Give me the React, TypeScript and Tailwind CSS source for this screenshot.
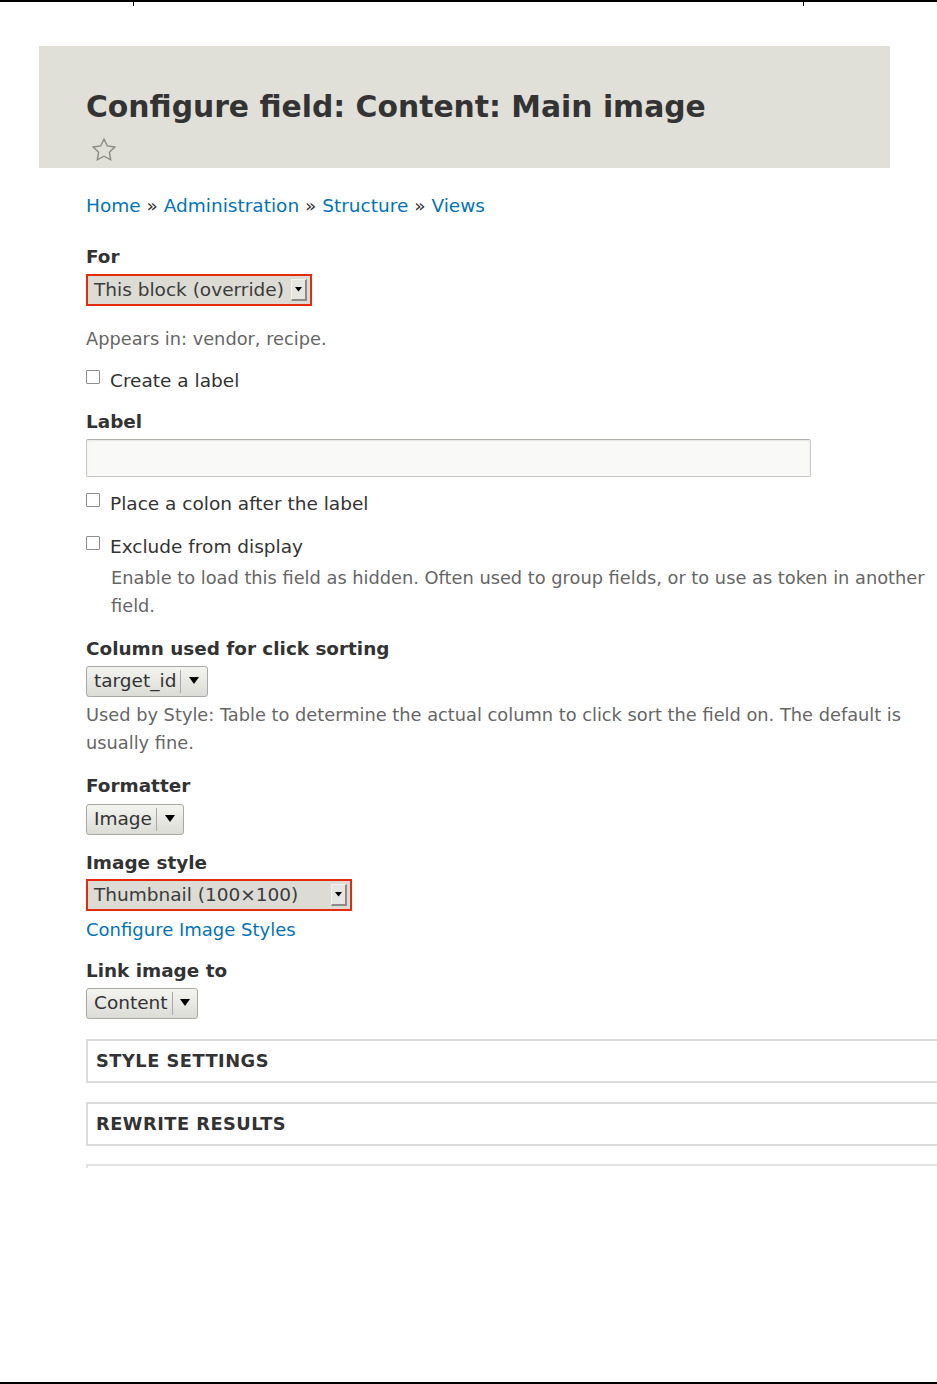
import React from "react";

const font = { fontFamily: '"DejaVu Sans", "Liberation Sans", sans-serif' };

function Arrow({ small }: { small?: boolean }) {
  return small ? (
    <svg width="7" height="5" viewBox="0 0 7 5">
      <polygon points="0,0 7,0 3.5,4.5" fill="#000" />
    </svg>
  ) : (
    <svg width="10" height="7" viewBox="0 0 10 7">
      <polygon points="0,0 10,0 5,7" fill="#000" />
    </svg>
  );
}

function RedSelect({ text, width }: { text: string; width: string }) {
  return (
    <div className={`${width} h-[32px] border-2 border-[#e62a0c] bg-[#dcdcd4] flex items-center justify-between pl-[6px] pr-[3px]`}>
      <span className="text-[#3b3b3b] text-[18.5px] leading-none">{text}</span>
      <div className="w-[16px] h-[22px] bg-[#e6e6e0] border-t border-l border-t-[#f4f4f0] border-l-[#f4f4f0] border-r-2 border-b-2 border-r-[#8a8a86] border-b-[#8a8a86] flex items-center justify-center">
        <Arrow small />
      </div>
    </div>
  );
}

function GraySelect({ text, width }: { text: string; width: string }) {
  return (
    <div className={`${width} h-[31px] border border-[#a8a8a4] rounded-[3px] bg-gradient-to-b from-[#f4f4f0] to-[#dcdcd6] flex items-center`}>
      <span className="pl-[7px] pr-[4px] text-[#333] text-[18.5px] leading-none">{text}</span>
      <div className="w-px h-[23px] bg-[#a8a8a4]" />
      <div className="flex-1 flex items-center justify-center pb-[3px]">
        <Arrow />
      </div>
    </div>
  );
}

function Checkbox({ label, mt }: { label: string; mt: string }) {
  return (
    <div className={`${mt} flex items-center h-[28px]`}>
      <div className="w-[14px] h-[14px] border border-[#8d8d8d] rounded-[1px] bg-white mb-[8px]" />
      <span className="ml-[10px] text-[#333] text-[18.5px]">{label}</span>
    </div>
  );
}

function FieldLabel({ text, mt }: { text: string; mt: string }) {
  return <div className={`${mt} font-bold text-[#333] text-[18.4px]`}>{text}</div>;
}

export default function App() {
  return (
    <div
      style={font}
      className="relative w-[937px] h-[1384px] bg-white border-t-2 border-b-2 border-black overflow-hidden text-[17.8px] leading-[28px]"
    >
      <div className="absolute top-0 left-[133px] w-px h-[4px] bg-black" />
      <div className="absolute top-0 left-[803px] w-px h-[4px] bg-black" />

      <div className="mt-[44px] ml-[39px] w-[851px] h-[122px] bg-[#e0e0d8] pl-[47px] pt-[43px]">
        <h1 className="text-[29.8px] leading-[36px] font-bold text-[#333]">
          Configure field: Content: Main image
        </h1>
        <svg className="ml-[5px] mt-[12px]" width="26" height="26" viewBox="0 0 24 24" fill="none" stroke="#8a8a84" strokeWidth="1.3" strokeLinejoin="miter">
          <polygon points="12,2 15.09,8.26 22,9.27 17,14.14 18.18,21.02 12,17.77 5.82,21.02 7,14.14 2,9.27 8.91,8.26" />
        </svg>
      </div>

      <div className="ml-[86px] mr-0">
        <div className="mt-[24px] text-[#0074bd] text-[18.5px]">
          <span>Home</span> <span className="text-[#333]">»</span> <span>Administration</span>{" "}
          <span className="text-[#333]">»</span> <span>Structure</span> <span className="text-[#333]">»</span>{" "}
          <span>Views</span>
        </div>

        <FieldLabel text="For" mt="mt-[23px]" />
        <div className="mt-[3px]">
          <RedSelect text="This block (override)" width="w-[226px]" />
        </div>

        <div className="mt-[19px] text-[#666]">Appears in: vendor, recipe.</div>

        <Checkbox label="Create a label" mt="mt-[14px]" />

        <FieldLabel text="Label" mt="mt-[13px]" />
        <div className="mt-[3px] w-[725px] h-[38px] border border-[#c8c8c4] border-t-[#b0b0ac] rounded-[2px] bg-[#f9f9f8] shadow-[inset_0_1px_2px_rgba(0,0,0,0.08)]" />

        <Checkbox label="Place a colon after the label" mt="mt-[13px]" />
        <Checkbox label="Exclude from display" mt="mt-[15px]" />
        <div className="mt-[3px] ml-[25px] text-[#666]">
          Enable to load this field as hidden. Often used to group fields, or to use as token in another field.
        </div>

        <FieldLabel text="Column used for click sorting" mt="mt-[15px]" />
        <div className="mt-[3px]">
          <GraySelect text="target_id" width="w-[122px]" />
        </div>
        <div className="mt-[4px] text-[#666] w-[830px]">
          Used by Style: Table to determine the actual column to click sort the field on. The default is usually fine.
        </div>

        <FieldLabel text="Formatter" mt="mt-[15px]" />
        <div className="mt-[4px]">
          <GraySelect text="Image" width="w-[98px]" />
        </div>

        <FieldLabel text="Image style" mt="mt-[14px]" />
        <div className="mt-[2px]">
          <RedSelect text="Thumbnail (100×100)" width="w-[266px]" />
        </div>
        <div className="mt-[5px] text-[#0074bd] text-[18px]">Configure Image Styles</div>

        <FieldLabel text="Link image to" mt="mt-[13px]" />
        <div className="mt-[3px]">
          <GraySelect text="Content" width="w-[112px]" />
        </div>

        <div className="mt-[20px] w-[860px] h-[44px] border-2 border-[#dcdcdc] flex items-center pl-[8px] font-bold text-[#333] tracking-[0.5px]">
          STYLE SETTINGS
        </div>
        <div className="mt-[19px] w-[860px] h-[44px] border-2 border-[#dcdcdc] flex items-center pl-[8px] font-bold text-[#333] tracking-[0.5px]">
          REWRITE RESULTS
        </div>
        <div className="mt-[18px] w-[860px] h-[4px] border-t-2 border-x-2 border-[#e4e4e4]" />
      </div>
    </div>
  );
}
